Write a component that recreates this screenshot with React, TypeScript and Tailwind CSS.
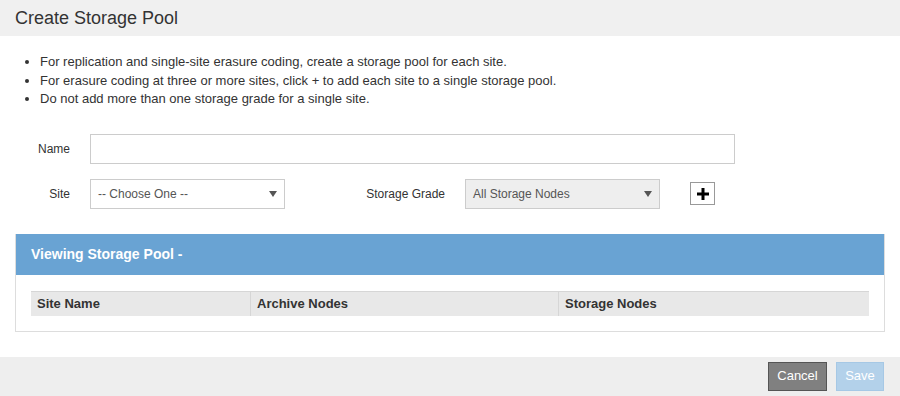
import React from 'react';

const Caret = () => (
  <svg width="8" height="6" viewBox="0 0 8 6" className="text-[#555]">
    <path d="M0 0h8L4 6z" fill="currentColor" />
  </svg>
);

const PlusIcon = () => (
  <svg width="12" height="12" viewBox="0 0 12 12">
    <rect x="4.5" y="0" width="3" height="12" fill="#000" />
    <rect x="0" y="4.5" width="12" height="3" fill="#000" />
  </svg>
);

const App: React.FC = () => {
  return (
    <div className="w-[900px] h-[396px] overflow-hidden bg-white text-[13px] text-[#333] font-['Liberation_Sans',Arial,sans-serif] flex flex-col">
      {/* Title bar */}
      <div className="h-[36px] shrink-0 bg-[#f0f0f0] px-[15px] flex items-center text-[18px] text-[#333]">
        Create Storage Pool
      </div>

      <div className="px-[15px] pt-[17px]">
        {/* Instructions */}
        <ul className="list-disc pl-[25px] leading-[18.5px]">
          <li>For replication and single-site erasure coding, create a storage pool for each site.</li>
          <li>For erasure coding at three or more sites, click + to add each site to a single storage pool.</li>
          <li>Do not add more than one storage grade for a single site.</li>
        </ul>

        {/* Name */}
        <div className="mt-[25px] flex items-center h-[30px] text-[12px]">
          <label className="w-[55px] text-right">Name</label>
          <input className="ml-[20px] w-[645px] h-[30px] border border-[#ccc] bg-white px-[7px] outline-none" />
        </div>

        {/* Site + grade */}
        <div className="mt-[15px] flex items-center h-[30px] text-[12px]">
          <label className="w-[55px] text-right">Site</label>
          <div className="ml-[20px] w-[195px] h-[30px] border border-[#ccc] bg-white pl-[7px] pr-[7px] flex items-center justify-between text-[#555]">
            <span>-- Choose One --</span>
            <Caret />
          </div>
          <label className="w-[160px] text-right">Storage Grade</label>
          <div className="ml-[20px] w-[195px] h-[30px] border border-[#ccc] bg-[#eee] pl-[7px] pr-[7px] flex items-center justify-between text-[#555]">
            <span>All Storage Nodes</span>
            <Caret />
          </div>
          <button className="ml-[30px] w-[25px] h-[23px] border border-[#999] bg-white flex items-center justify-center">
            <PlusIcon />
          </button>
        </div>

        {/* Viewing panel */}
        <div className="mt-[25px] border border-[#ddd] border-t-0">
          <div className="h-[41px] bg-[#69a3d3] px-[15px] flex items-center text-white font-bold text-[14px]">
            Viewing Storage Pool -
          </div>
          <div className="px-[15px] pt-[16px] pb-[15px]">
            <div className="grid grid-cols-[219px_308px_1fr] h-[25px] bg-[#e8e8e8] border-t border-[#d6d6d6] font-bold">
              <div className="px-[6px] flex items-center">Site Name</div>
              <div className="px-[6px] flex items-center border-l border-[#d6d6d6]">Archive Nodes</div>
              <div className="px-[6px] flex items-center border-l border-[#d6d6d6]">Storage Nodes</div>
            </div>
          </div>
        </div>
      </div>

      {/* Footer */}
      <div className="mt-[25px] bg-[#eee] flex justify-end gap-[9px] pt-[5px] pb-[5px] pr-[16px]">
        <button className="w-[59px] h-[29px] bg-[#808080] border border-[#555] text-white text-[13px]">Cancel</button>
        <button className="w-[48px] h-[29px] bg-[#b3d1ea] border border-[#a6c8e5] text-white text-[13px]">Save</button>
      </div>
    </div>
  );
};

export default App;
